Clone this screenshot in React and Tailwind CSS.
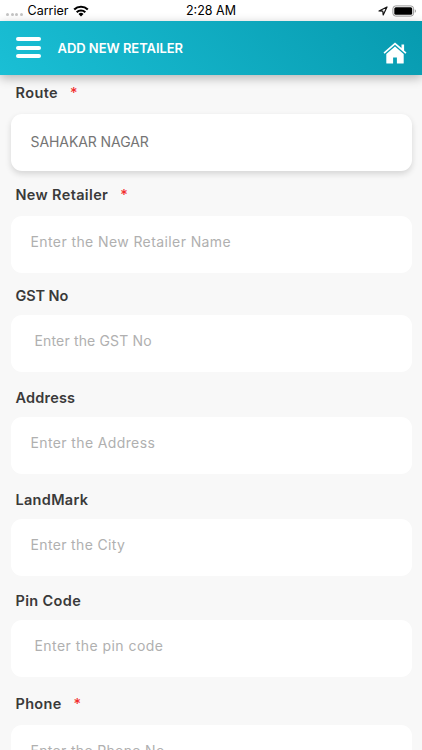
const fields = [
  { label: 'Route', required: true, value: 'SAHAKAR NAGAR', row: 'h-[39px] pt-2', track: 'tracking-[0.4px]', box: 'h-[57px] pt-[18px] pl-5 text-[#757575] shadow-[0_3px_6px_rgba(0,0,0,0.14)]', text: 'tracking-[-0.08px]' },
  { label: 'New Retailer', required: true, value: 'Enter the New Retailer Name', row: 'h-[45px] pt-[14px]', track: 'tracking-[0.35px]', box: 'h-[57px] pt-4 pl-5 text-[#b0b0b0]', text: 'tracking-[0.4px]' },
  { label: 'GST No', value: 'Enter the GST No', row: 'h-[42px] pt-[13px]', track: 'tracking-[-0.1px]', box: 'h-[57px] pt-4 pl-6 text-[#b0b0b0]', text: 'tracking-[0.15px]' },
  { label: 'Address', value: 'Enter the Address', row: 'h-[45px] pt-4', track: 'tracking-[0.2px]', box: 'h-[57px] pt-4 pl-5 text-[#b0b0b0]', text: 'tracking-[0.38px]' },
  { label: 'LandMark', value: 'Enter the City', row: 'h-[44.5px] pt-4', track: 'tracking-[0.3px]', box: 'h-[57px] pt-4 pl-5 text-[#b0b0b0]', text: 'tracking-[0.35px]' },
  { label: 'Pin Code', value: 'Enter the pin code', row: 'h-[44.5px] pt-[15.5px]', track: 'tracking-[0.35px]', box: 'h-[57px] pt-4 pl-6 text-[#b0b0b0]', text: 'tracking-[0.45px]' },
  { label: 'Phone', required: true, value: 'Enter the Phone No', row: 'h-[48px] pt-[17px]', track: 'tracking-[0.3px]', box: 'h-[57px] pt-4 pl-5 text-[#b0b0b0]', text: 'tracking-[0.32px]' },
];

function StatusBar() {
  return (
    <div className="flex h-[21px] items-center bg-white px-[6px] text-black">
      <div className="flex flex-1 items-center">
        <div className="mt-[7px] flex gap-[1.5px]">
          {[0, 1, 2, 3].map((i) => <span key={i} className="size-[3px] rounded-full bg-[#c4c4c4]" />)}
        </div>
        <span className="ml-[5px] text-[12.5px] leading-5">Carrier</span>
        <svg className="ml-[5px]" width="16" height="12" viewBox="0 0 16 12">
          <path d="M1.2 4.5a9.8 9.8 0 0 1 13.6 0" fill="none" stroke="#000" strokeWidth="2.2" />
          <path d="M3.7 7.2a6.2 6.2 0 0 1 8.6 0" fill="none" stroke="#000" strokeWidth="2.1" />
          <path d="M8 11.5 5.5 9a3.7 3.7 0 0 1 5 0Z" />
        </svg>
      </div>
      <span className="text-[12.5px] leading-5">2:28 AM</span>
      <div className="flex flex-1 items-center justify-end">
        <svg width="10" height="10" viewBox="0 0 10 10">
          <path d="M1 5 9 1 5.2 9 4.8 5.2Z" fill="none" stroke="#111" strokeWidth="1.2" strokeLinejoin="round" />
        </svg>
        <svg className="-mr-[1px] ml-1" width="25" height="12" viewBox="0 0 25 12">
          <rect x=".9" y=".9" width="20.7" height="10.2" rx="2.8" fill="none" stroke="#999" strokeWidth="1" />
          <rect x="2.3" y="2.3" width="17.9" height="7.4" rx="1.5" />
          <path d="M22.8 4.2v3.6c1.5-.5 1.5-3.1 0-3.6Z" fill="#999" />
        </svg>
      </div>
    </div>
  );
}

function Header() {
  return (
    <header className="relative flex h-[54px] items-start bg-linear-[45deg] from-[#1abfd5] to-[#079aaf] pl-4 shadow-[0_3px_10px_rgba(0,0,0,0.28)]">
      <div className="mt-[16px] flex w-[25px] flex-col gap-[4.5px]">
        <span className="h-1 rounded-full bg-white" />
        <span className="h-1 rounded-full bg-white" />
        <span className="h-1 rounded-full bg-white" />
      </div>
      <h1 className="mt-[16.5px] ml-[16.5px] flex-1 text-[13px] leading-5 font-semibold tracking-[-0.05px] whitespace-nowrap text-white">ADD NEW RETAILER</h1>
      <svg className="mt-[21px] mr-[15px]" width="24" height="22" viewBox="0 0 24 22" fill="#fff">
        <path d="M12 .5.5 10.5l1.1 1.2L12 2.8l10.4 8.9 1.1-1.2-2.4-2.1V2.6h-2.6v3.5Z" />
        <path d="M12 4.6 3.3 12v9a.5.5 0 0 0 .5.5h6.3v-6h3.8v6h6.3a.5.5 0 0 0 .5-.5v-9Z" />
      </svg>
    </header>
  );
}

export default function App() {
  return (
    <div className="flex h-[750px] w-[422px] flex-col overflow-hidden bg-[#f8f8f8] font-['Inter',sans-serif]">
      <StatusBar />
      <Header />
      <main className="min-h-0 flex-1 overflow-hidden px-[10.5px]">
        {fields.map((f) => (
          <section key={f.label}>
            <div className={`flex pl-[5px] text-[14.5px] leading-5 font-semibold text-[#3a3a3a] ${f.row}`}>
              <label className={f.track}>{f.label}</label>
              {f.required && <span className="ml-[12px] font-medium text-[#f22b2b]">*</span>}
            </div>
            <div className={`rounded-[11px] bg-white text-[14px] leading-5 font-normal whitespace-nowrap ${f.box}`}>
              <span className={f.text}>{f.value}</span>
            </div>
          </section>
        ))}
      </main>
    </div>
  );
}
